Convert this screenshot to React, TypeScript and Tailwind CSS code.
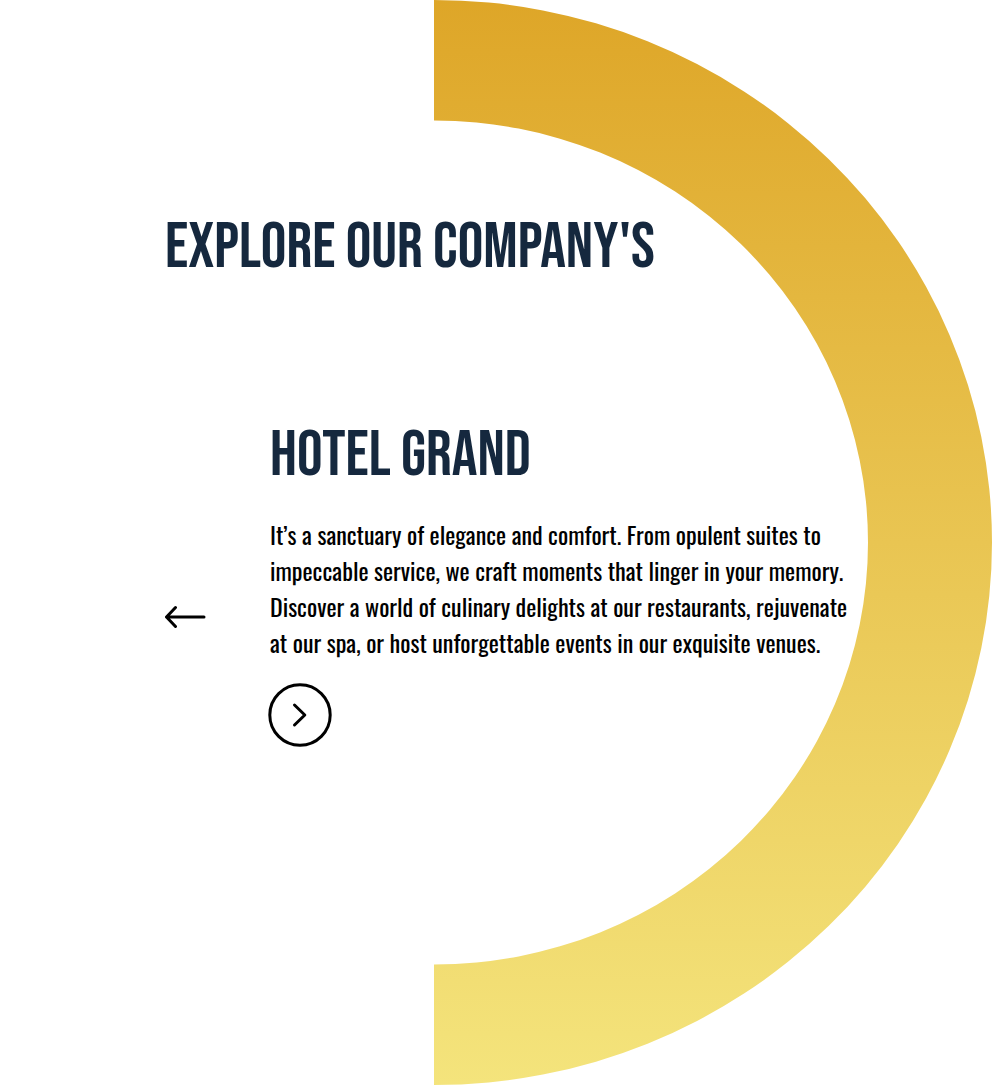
function Arc() {
  return (
    <svg
      className="absolute inset-y-0 right-0 h-full w-9/16"
      viewBox="0 0 558 1085"
      preserveAspectRatio="none"
      aria-hidden="true"
    >
      <defs>
        <linearGradient id="gold" x1="0" y1="0" x2="0" y2="1">
          <stop offset="0" stopColor="#dea628" />
          <stop offset="1" stopColor="#f4e47c" />
        </linearGradient>
      </defs>
      <path
        d="M0 0A558 542.5 0 0 1 0 1085V964.5A434 422 0 0 0 0 120.5Z"
        fill="url(#gold)"
      />
    </svg>
  );
}

const headingStyle =
  "text-[64px] leading-16 font-normal whitespace-nowrap text-[#15283e] font-['Bebas_Neue','Oswald','Liberation_Sans_Narrow','Liberation_Sans',sans-serif]";

export default function App() {
  return (
    <main className="relative flex min-h-screen flex-col bg-white pt-[216px] pr-[124px] pb-20 pl-[165px] text-black">
      <Arc />
      <h1 className={`relative ${headingStyle}`}>EXPLORE OUR COMPANY'S</h1>
      <section className="relative mt-36 flex items-center gap-16">
        <button type="button" aria-label="Previous company" className="mt-[62px] shrink-0">
          <svg
            width="41"
            height="24"
            viewBox="1 0 41 24"
            fill="none"
            stroke="currentColor"
            strokeWidth="3"
            strokeLinecap="round"
            strokeLinejoin="round"
          >
            <path d="M40 12H2.500M11.500 2.500L2.500 12L11.500 21.500" />
          </svg>
        </button>
        <div className="min-w-0">
          <h2 className={headingStyle}>HOTEL GRAND</h2>
          <p className="mt-7 font-['Oswald','Liberation_Sans_Narrow','Liberation_Sans',sans-serif] text-2xl leading-9 whitespace-nowrap [font-kerning:none]">
            It’s a sanctuary of elegance and comfort. From opulent suites to
            <br />
            impeccable service, we craft moments that linger in your memory.
            <br />
            Discover a world of culinary delights at our restaurants, rejuvenate
            <br />
            at our spa, or host unforgettable events in our exquisite venues.
          </p>
          <button type="button" aria-label="Next company" className="mt-[23px] -ml-0.5 block">
            <svg
              width="64"
              height="64"
              viewBox="0 0 64 64"
              fill="none"
              stroke="currentColor"
              strokeWidth="3"
              strokeLinecap="round"
              strokeLinejoin="round"
            >
              <circle cx="32" cy="32" r="30.200" />
              <path d="M26.500 22L36.800 32L26.500 42" />
            </svg>
          </button>
        </div>
      </section>
    </main>
  );
}
